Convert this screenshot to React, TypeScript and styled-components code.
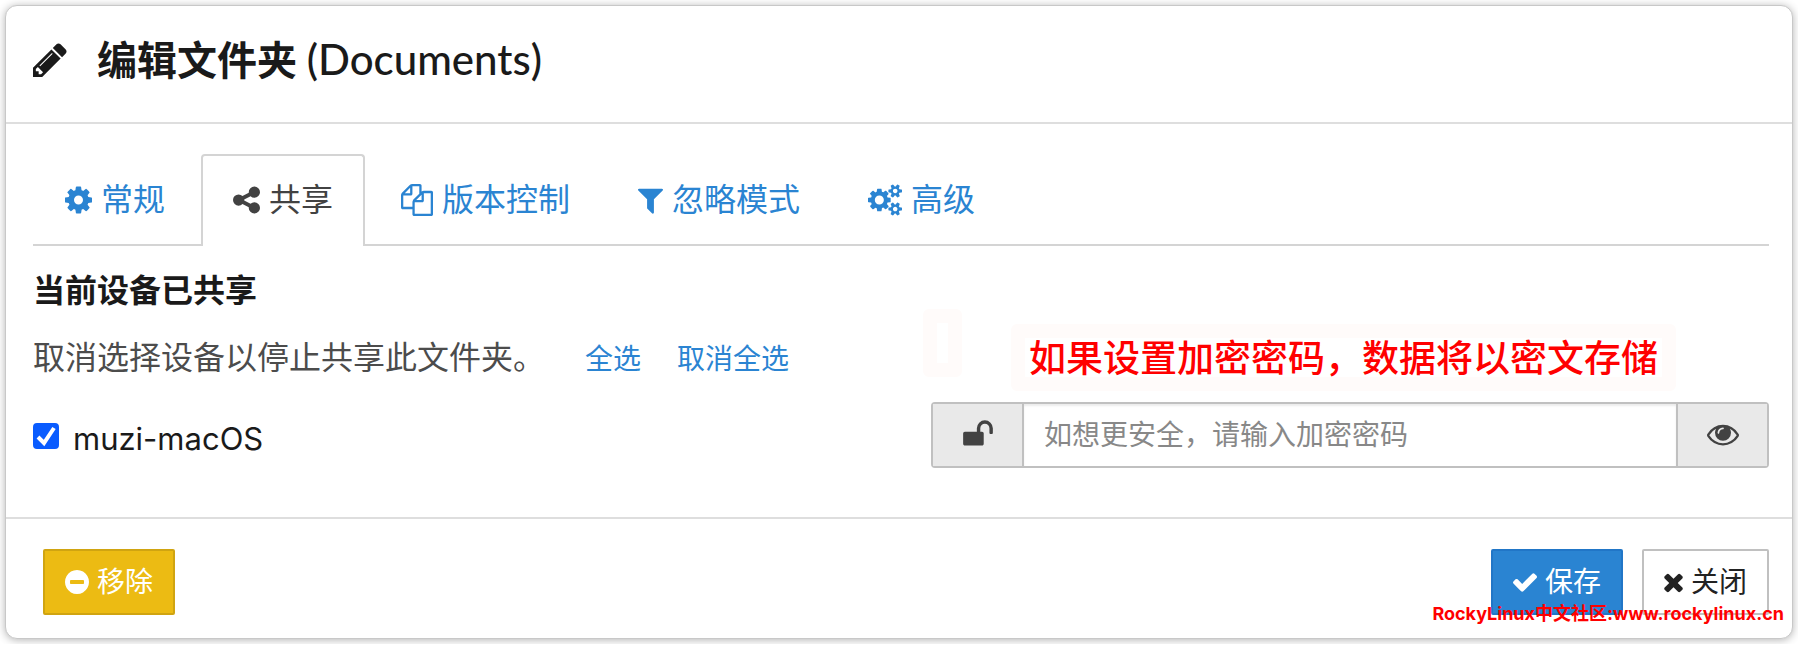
import React, { useState } from 'react';
import styled, { createGlobalStyle, css } from 'styled-components';

const GlobalStyle = createGlobalStyle`
  *, *::before, *::after { box-sizing: border-box; }
  body {
    margin: 0;
    background: #fff;
    color: #1a1a1a;
    font-family: Inter, "Noto Sans CJK SC", sans-serif;
    font-size: 32px;
    line-height: 48px;
  }
  h1, h2, p { margin: 0; }
`;

const icons = {
  pencil: [1536, 'M363 1536l91-91-235-235-91 91v107h128v128h107zm523-928q0-22-22-22-10 0-17 7l-542 542q-7 7-7 17 0 22 22 22 10 0 17-7l542-542q7-7 7-17zm-54-192l416 416-832 832h-416v-416zm683 96q0 53-37 90l-166 166-416-416 166-165q36-38 90-38 53 0 91 38l235 234q37 39 37 91z'],
  cog: [1536, 'M1024 896q0-106-75-181t-181-75-181 75-75 181 75 181 181 75 181-75 75-181zm512-109v222q0 12-8 23t-20 13l-185 28q-19 54-39 91 35 50 107 138 10 12 10 25t-9 23q-27 37-99 108t-94 71q-12 0-26-9l-138-108q-44 23-91 38-16 136-29 186-7 28-36 28h-222q-14 0-24.5-8.5t-11.5-21.5l-28-184q-49-16-90-37l-141 107q-10 9-25 9-14 0-25-11-126-114-165-168-7-10-7-23 0-12 8-23 15-21 51-66.5t54-70.5q-27-50-41-99l-183-27q-13-2-21-12.5t-8-23.5v-222q0-12 8-23t19-13l186-28q14-46 39-92-40-57-107-138-10-12-10-24 0-10 9-23 26-36 98.5-107.5t94.5-71.5q13 0 26 10l138 107q44-23 91-38 16-136 29-186 7-28 36-28h222q14 0 24.5 8.5t11.5 21.5l28 184q49 16 90 37l142-107q9-9 24-9 13 0 25 10 129 119 165 170 7 8 7 22 0 12-8 23-15 21-51 66.5t-54 70.5q26 50 41 98l183 28q13 2 21 12.5t8 23.5z'],
  share: [1536, 'M1216 1024q133 0 226.5 93.5t93.5 226.5-93.5 226.5-226.5 93.5-226.5-93.5-93.5-226.5q0-12 2-34l-360-180q-92 86-218 86-133 0-226.5-93.5t-93.5-226.5 93.5-226.5 226.5-93.5q126 0 218 86l360-180q-2-22-2-34 0-133 93.5-226.5t226.5-93.5 226.5 93.5 93.5 226.5-93.5 226.5-226.5 93.5q-126 0-218-86l-360 180q2 22 2 34t-2 34l360 180q92-86 218-86z'],
  files: [1792, 'M1696 384q40 0 68 28t28 68v1216q0 40-28 68t-68 28h-960q-40 0-68-28t-28-68v-288h-544q-40 0-68-28t-28-68v-672q0-40 20-88t48-76l408-408q28-28 76-48t88-20h416q40 0 68 28t28 68v328q68-40 128-40h416zm-544 213l-299 299h299v-299zm-640-384l-299 299h299v-299zm196 647l316-316v-416h-384v416q0 40-28 68t-68 28h-416v640h512v-256q0-40 20-88t48-76zm956 804v-1152h-384v416q0 40-28 68t-68 28h-416v640h896z'],
  filter: [1408, 'M1403 295q17 41-14 70l-493 493v742q0 42-39 59-13 5-25 5-27 0-45-19l-256-256q-19-19-19-45v-486l-493-493q-31-29-14-70 17-39 59-39h1280q42 0 59 39z'],
  cogs: [1920, 'M896 896q0-106-75-181t-181-75-181 75-75 181 75 181 181 75 181-75 75-181zm768 512q0-52-38-90t-90-38-90 38-38 90q0 53 37.5 90.5t90.5 37.5 90.5-37.5 37.5-90.5zm0-1024q0-52-38-90t-90-38-90 38-38 90q0 53 37.5 90.5t90.5 37.5 90.5-37.5 37.5-90.5zm-384 421v185q0 10-7 19.5t-16 10.5l-155 24q-11 35-32 76 34 48 90 115 7 11 7 20 0 12-7 19-23 30-82.5 89.5t-78.5 59.5q-11 0-21-7l-115-90q-37 19-77 31-11 108-23 155-7 24-30 24h-186q-11 0-20-7.5t-10-17.5l-23-153q-34-10-75-31l-118 89q-7 7-20 7-11 0-21-8-144-133-144-160 0-9 7-19 10-14 41-53t47-61q-23-44-35-82l-152-24q-10-1-17-9.5t-7-19.5v-185q0-10 7-19.5t16-10.5l155-24q11-35 32-76-34-48-90-115-7-11-7-20 0-12 7-20 22-30 82-89t79-59q11 0 21 7l115 90q34-18 77-32 11-108 23-154 7-24 30-24h186q11 0 20 7.5t10 17.5l23 153q34 10 75 31l118-89q8-7 20-7 11 0 21 8 144 133 144 160 0 8-7 19-12 16-42 54t-45 60q23 48 34 82l152 23q10 2 17 10.5t7 19.5zm640 533v140q0 16-149 31-12 27-30 52 51 113 51 138 0 4-4 7-122 71-124 71-8 0-46-47t-52-68q-20 2-30 2t-30-2q-14 21-52 68t-46 47q-2 0-124-71-4-3-4-7 0-25 51-138-18-25-30-52-149-15-149-31v-140q0-16 149-31 13-29 30-52-51-113-51-138 0-4 4-7 4-2 35-20t59-34 30-16q8 0 46 46.5t52 67.5q20-2 30-2t30 2q51-71 92-112l6-2q4 0 124 70 4 3 4 7 0 25-51 138 17 23 30 52 149 15 149 31zm0-1024v140q0 16-149 31-12 27-30 52 51 113 51 138 0 4-4 7-122 71-124 71-8 0-46-47t-52-68q-20 2-30 2t-30-2q-14 21-52 68t-46 47q-2 0-124-71-4-3-4-7 0-25 51-138-18-25-30-52-149-15-149-31v-140q0-16 149-31 13-29 30-52-51-113-51-138 0-4 4-7 4-2 35-20t59-34 30-16q8 0 46 46.5t52 67.5q20-2 30-2t30 2q51-71 92-112l6-2q4 0 124 70 4 3 4 7 0 25-51 138 17 23 30 52 149 15 149 31z'],
  unlock: [1792, 'M1728 576v256q0 26-19 45t-45 19h-64q-26 0-45-19t-19-45v-256q0-106-75-181t-181-75-181 75-75 181v192h96q40 0 68 28t28 68v576q0 40-28 68t-68 28h-960q-40 0-68-28t-28-68v-576q0-40 28-68t68-28h672v-192q0-185 131.5-316.5t316.5-131.5 316.5 131.5 131.5 316.5z'],
  eye: [1792, 'M1664 960q-152-236-381-353 61 104 61 225 0 185-131.5 316.5t-316.5 131.5-316.5-131.5-131.5-316.5q0-121 61-225-229 117-381 353 133 205 333.5 326.5t434.5 121.5 434.5-121.5 333.5-326.5zm-720-384q0-20-14-34t-34-14q-125 0-214.5 89.5t-89.5 214.5q0 20 14 34t34 14 34-14 14-34q0-86 61-147t147-61q20 0 34-14t14-34zm848 384q0 34-20 69-140 230-376.5 368.5t-499.5 138.5-499.5-139-376.5-368q-20-35-20-69t20-69q140-229 376.5-368t499.5-139 499.5 139 376.5 368q20 35 20 69z'],
  minus: [1536, 'M1216 960v-128q0-26-19-45t-45-19h-768q-26 0-45 19t-19 45v128q0 26 19 45t45 19h768q26 0 45-19t19-45zm320-64q0 209-103 385.5t-279.5 279.5-385.5 103-385.5-103-279.5-279.5-103-385.5 103-385.5 279.5-279.5 385.5-103 385.5 103 279.5 279.5 103 385.5z'],
  check: [1550, 'M1550 566q0 40-28 68l-724 724-136 136q-28 28-68 28t-68-28l-136-136-362-362q-28-28-28-68t28-68l136-136q28-28 68-28t68 28l294 295 656-657q28-28 68-28t68 28l136 136q28 28 28 68z'],
  times: [1188, 'M1188 1322q0 40-28 68l-136 136q-28 28-68 28t-68-28l-294-294-294 294q-28 28-68 28t-68-28l-136-136q-28-28-28-68t28-68l294-294-294-294q-28-28-28-68t28-68l136-136q28-28 68-28t68 28l294 294 294-294q28-28 68-28t68 28l136 136q28 28 28 68t-28 68l-294 294 294 294q28 28 28 68z'],
} as const;

type IconName = keyof typeof icons;

const Glyph = styled.svg<{ $size: number }>`
  flex: none;
  height: ${p => p.$size}px;
  fill: currentColor;
  overflow: visible;
`;

const Icon = ({ name, size }: { name: IconName; size: number }) => {
  const [width, d] = icons[name];
  return (
    <Glyph $size={size} viewBox={`0 0 ${width} 1792`} width={Math.round((width * size) / 1792)} aria-hidden="true">
      <path d={d} />
    </Glyph>
  );
};

const Page = styled.main`
  padding: 5px;
`;

const Dialog = styled.section`
  position: relative;
  border: 1px solid #c8c8c8;
  border-radius: 12px;
  background: #fff;
  box-shadow: 0 1px 8px rgba(0, 0, 0, 0.3);
`;

const Header = styled.header`
  display: flex;
  align-items: center;
  gap: 30px;
  padding: 26px 27px 34px;
  border-bottom: 2px solid #dedede;
`;

const Title = styled.h1`
  font-family: Lato, "Noto Sans CJK SC", sans-serif;
  font-size: 40px;
  line-height: 56px;
  font-weight: 700;
`;

const FolderName = styled.span`
  font-size: 42px;
  font-weight: 500;
  line-height: 1;
`;

const Body = styled.div`
  padding: 30px 23px 49px 27px;
`;

const Tabs = styled.nav`
  display: flex;
  gap: 4px;
  border-bottom: 2px solid #d4d4d4;
`;

const Tab = styled.button<{ $active: boolean }>`
  display: flex;
  align-items: center;
  gap: 9px;
  margin-bottom: -2px;
  padding: 20px 30px 22px;
  border: 2px solid transparent;
  border-bottom: 0;
  border-radius: 4px 4px 0 0;
  background: transparent;
  color: #2a84d2;
  font: inherit;
  cursor: pointer;
  ${p => p.$active && css`
    border-color: #d4d4d4;
    background: #fff;
    color: #424242;
  `}
`;

const Panel = styled.div`
  padding-top: 21px;
`;

const PanelTitle = styled.h2`
  font-size: 32px;
  line-height: 48px;
  font-weight: 700;
`;

const Hint = styled.div`
  display: flex;
  align-items: baseline;
  gap: 36px;
  margin-top: 19px;
  color: #4c4c4c;
`;

const Link = styled.a`
  color: #2a84d2;
  font-size: 28px;
  text-decoration: none;
`;

const HintText = styled.p`
  margin-right: 4px;
`;

const DeviceRow = styled.div`
  display: grid;
  grid-template-columns: 1fr 1fr;
  gap: 60px;
  margin-top: 19px;
`;

const Device = styled.label`
  display: flex;
  align-items: center;
  align-self: center;
  gap: 14px;
  padding-top: 8px;
  font-size: 31px;
`;

const CheckBoxFrame = styled.span`
  display: grid;
  width: 26px;
  height: 26px;
  margin-bottom: 6px;
  > * { grid-area: 1 / 1; }
`;

const Checkbox = styled.input`
  appearance: none;
  width: 26px;
  height: 26px;
  margin: 0;
  border: 2px solid #8a8a8a;
  border-radius: 4px;
  background: #fff;
  &:checked { border-color: #0a5cff; background: #0a5cff; }
`;

const CheckMark = styled.svg`
  width: 26px;
  height: 26px;
  fill: none;
  stroke: #fff;
  stroke-width: 4;
  pointer-events: none;
`;

const InputGroup = styled.div`
  position: relative;
  display: flex;
  height: 66px;
  border: 2px solid #c0c0c0;
  border-radius: 4px;
`;

const addon = css`
  display: flex;
  flex: none;
  align-items: center;
  justify-content: center;
  width: 91px;
  padding: 0 0 2px;
  border: 0 solid #c0c0c0;
  background: #e9e9e9;
  color: #424242;
`;

const LockAddon = styled.span`
  ${addon}
  border-right-width: 2px;
`;

const RevealButton = styled.button`
  ${addon}
  border-left-width: 2px;
  cursor: pointer;
`;

const Password = styled.input`
  flex: 1;
  min-width: 0;
  padding: 0 20px;
  border: 0;
  background: #fff;
  box-shadow: inset 0 2px 2px rgba(0, 0, 0, 0.08);
  color: #424242;
  font: inherit;
  font-size: 28px;
  outline: 0;
  &::placeholder { color: #888; opacity: 1; }
`;

const note = css`
  position: absolute;
  border: 14px solid #fffbfa;
  border-radius: 6px;
  background: #fff;
`;

const Note = styled.p`
  ${note}
  right: 91px;
  bottom: 75px;
  padding: 3px 4px 0;
  color: #f00;
  font-size: 37px;
  font-weight: 500;
  line-height: 36px;
  white-space: nowrap;
`;

const EmptyNote = styled.span`
  ${note}
  left: -10px;
  bottom: 89px;
  width: 39px;
  height: 68px;
`;

const Footer = styled.footer`
  display: flex;
  gap: 19px;
  padding: 30px 23px 23px 37px;
  border-top: 2px solid #dedede;
`;

const tones = {
  warning: ['#ecbb13', '#d0a411', '#fff'],
  primary: ['#2a84d2', '#2176c7', '#fff'],
  plain: ['#fff', '#c0c0c0', '#222'],
} as const;

const Button = styled.button<{ $tone: keyof typeof tones; $pushRest?: boolean }>`
  display: flex;
  align-items: center;
  gap: 8px;
  height: 66px;
  margin-right: ${p => (p.$pushRest ? 'auto' : 0)};
  padding: 0 20px;
  border: 2px solid ${p => tones[p.$tone][1]};
  border-radius: 2px;
  background: ${p => tones[p.$tone][0]};
  color: ${p => tones[p.$tone][2]};
  font: inherit;
  font-size: 28px;
  cursor: pointer;
`;

const Watermark = styled.div`
  position: absolute;
  right: 8px;
  bottom: 12px;
  color: #f00;
  font-family: Inter, "Noto Sans CJK SC", sans-serif;
  font-size: 18px;
  font-weight: 700;
  line-height: 24px;
  white-space: nowrap;
  pointer-events: none;
`;

const tabs: { icon: IconName; label: string }[] = [
  { icon: 'cog', label: '常规' },
  { icon: 'share', label: '共享' },
  { icon: 'files', label: '版本控制' },
  { icon: 'filter', label: '忽略模式' },
  { icon: 'cogs', label: '高级' },
];

export default function App() {
  const [active, setActive] = useState('共享');
  const [shared, setShared] = useState(true);
  const [revealed, setRevealed] = useState(false);

  return (
    <Page lang="zh-CN">
      <GlobalStyle />
      <Dialog>
        <Header>
          <Icon name="pencil" size={40} />
          <Title>编辑文件夹 <FolderName>(Documents)</FolderName></Title>
        </Header>
        <Body>
          <Tabs>
            {tabs.map(t => (
              <Tab key={t.label} type="button" $active={t.label === active} onClick={() => setActive(t.label)}>
                <Icon name={t.icon} size={32} />
                {t.label}
              </Tab>
            ))}
          </Tabs>
          <Panel>
            <PanelTitle>当前设备已共享</PanelTitle>
            <Hint>
              <HintText>取消选择设备以停止共享此文件夹。</HintText>
              <Link href="#all" onClick={() => setShared(true)}>全选</Link>
              <Link href="#none" onClick={() => setShared(false)}>取消全选</Link>
            </Hint>
            <DeviceRow>
              <Device>
                <CheckBoxFrame>
                  <Checkbox type="checkbox" checked={shared} onChange={e => setShared(e.target.checked)} />
                  {shared && (
                    <CheckMark viewBox="0 0 26 26" aria-hidden="true">
                      <path d="M5 14l6 6L21 5" />
                    </CheckMark>
                  )}
                </CheckBoxFrame>
                muzi-macOS
              </Device>
              <InputGroup>
                <LockAddon><Icon name="unlock" size={32} /></LockAddon>
                <Password
                  type={revealed ? 'text' : 'password'}
                  aria-label="加密密码"
                  placeholder="如想更安全，请输入加密密码"
                />
                <RevealButton type="button" aria-label="显示密码" onClick={() => setRevealed(!revealed)}>
                  <Icon name="eye" size={32} />
                </RevealButton>
                <EmptyNote />
                <Note>如果设置加密密码，数据将以密文存储</Note>
              </InputGroup>
            </DeviceRow>
          </Panel>
        </Body>
        <Footer>
          <Button type="button" $tone="warning" $pushRest><Icon name="minus" size={28} />移除</Button>
          <Button type="button" $tone="primary"><Icon name="check" size={28} />保存</Button>
          <Button type="button" $tone="plain"><Icon name="times" size={28} />关闭</Button>
        </Footer>
        <Watermark>RockyLinux中文社区:www.rockylinux.cn</Watermark>
      </Dialog>
    </Page>
  );
}
